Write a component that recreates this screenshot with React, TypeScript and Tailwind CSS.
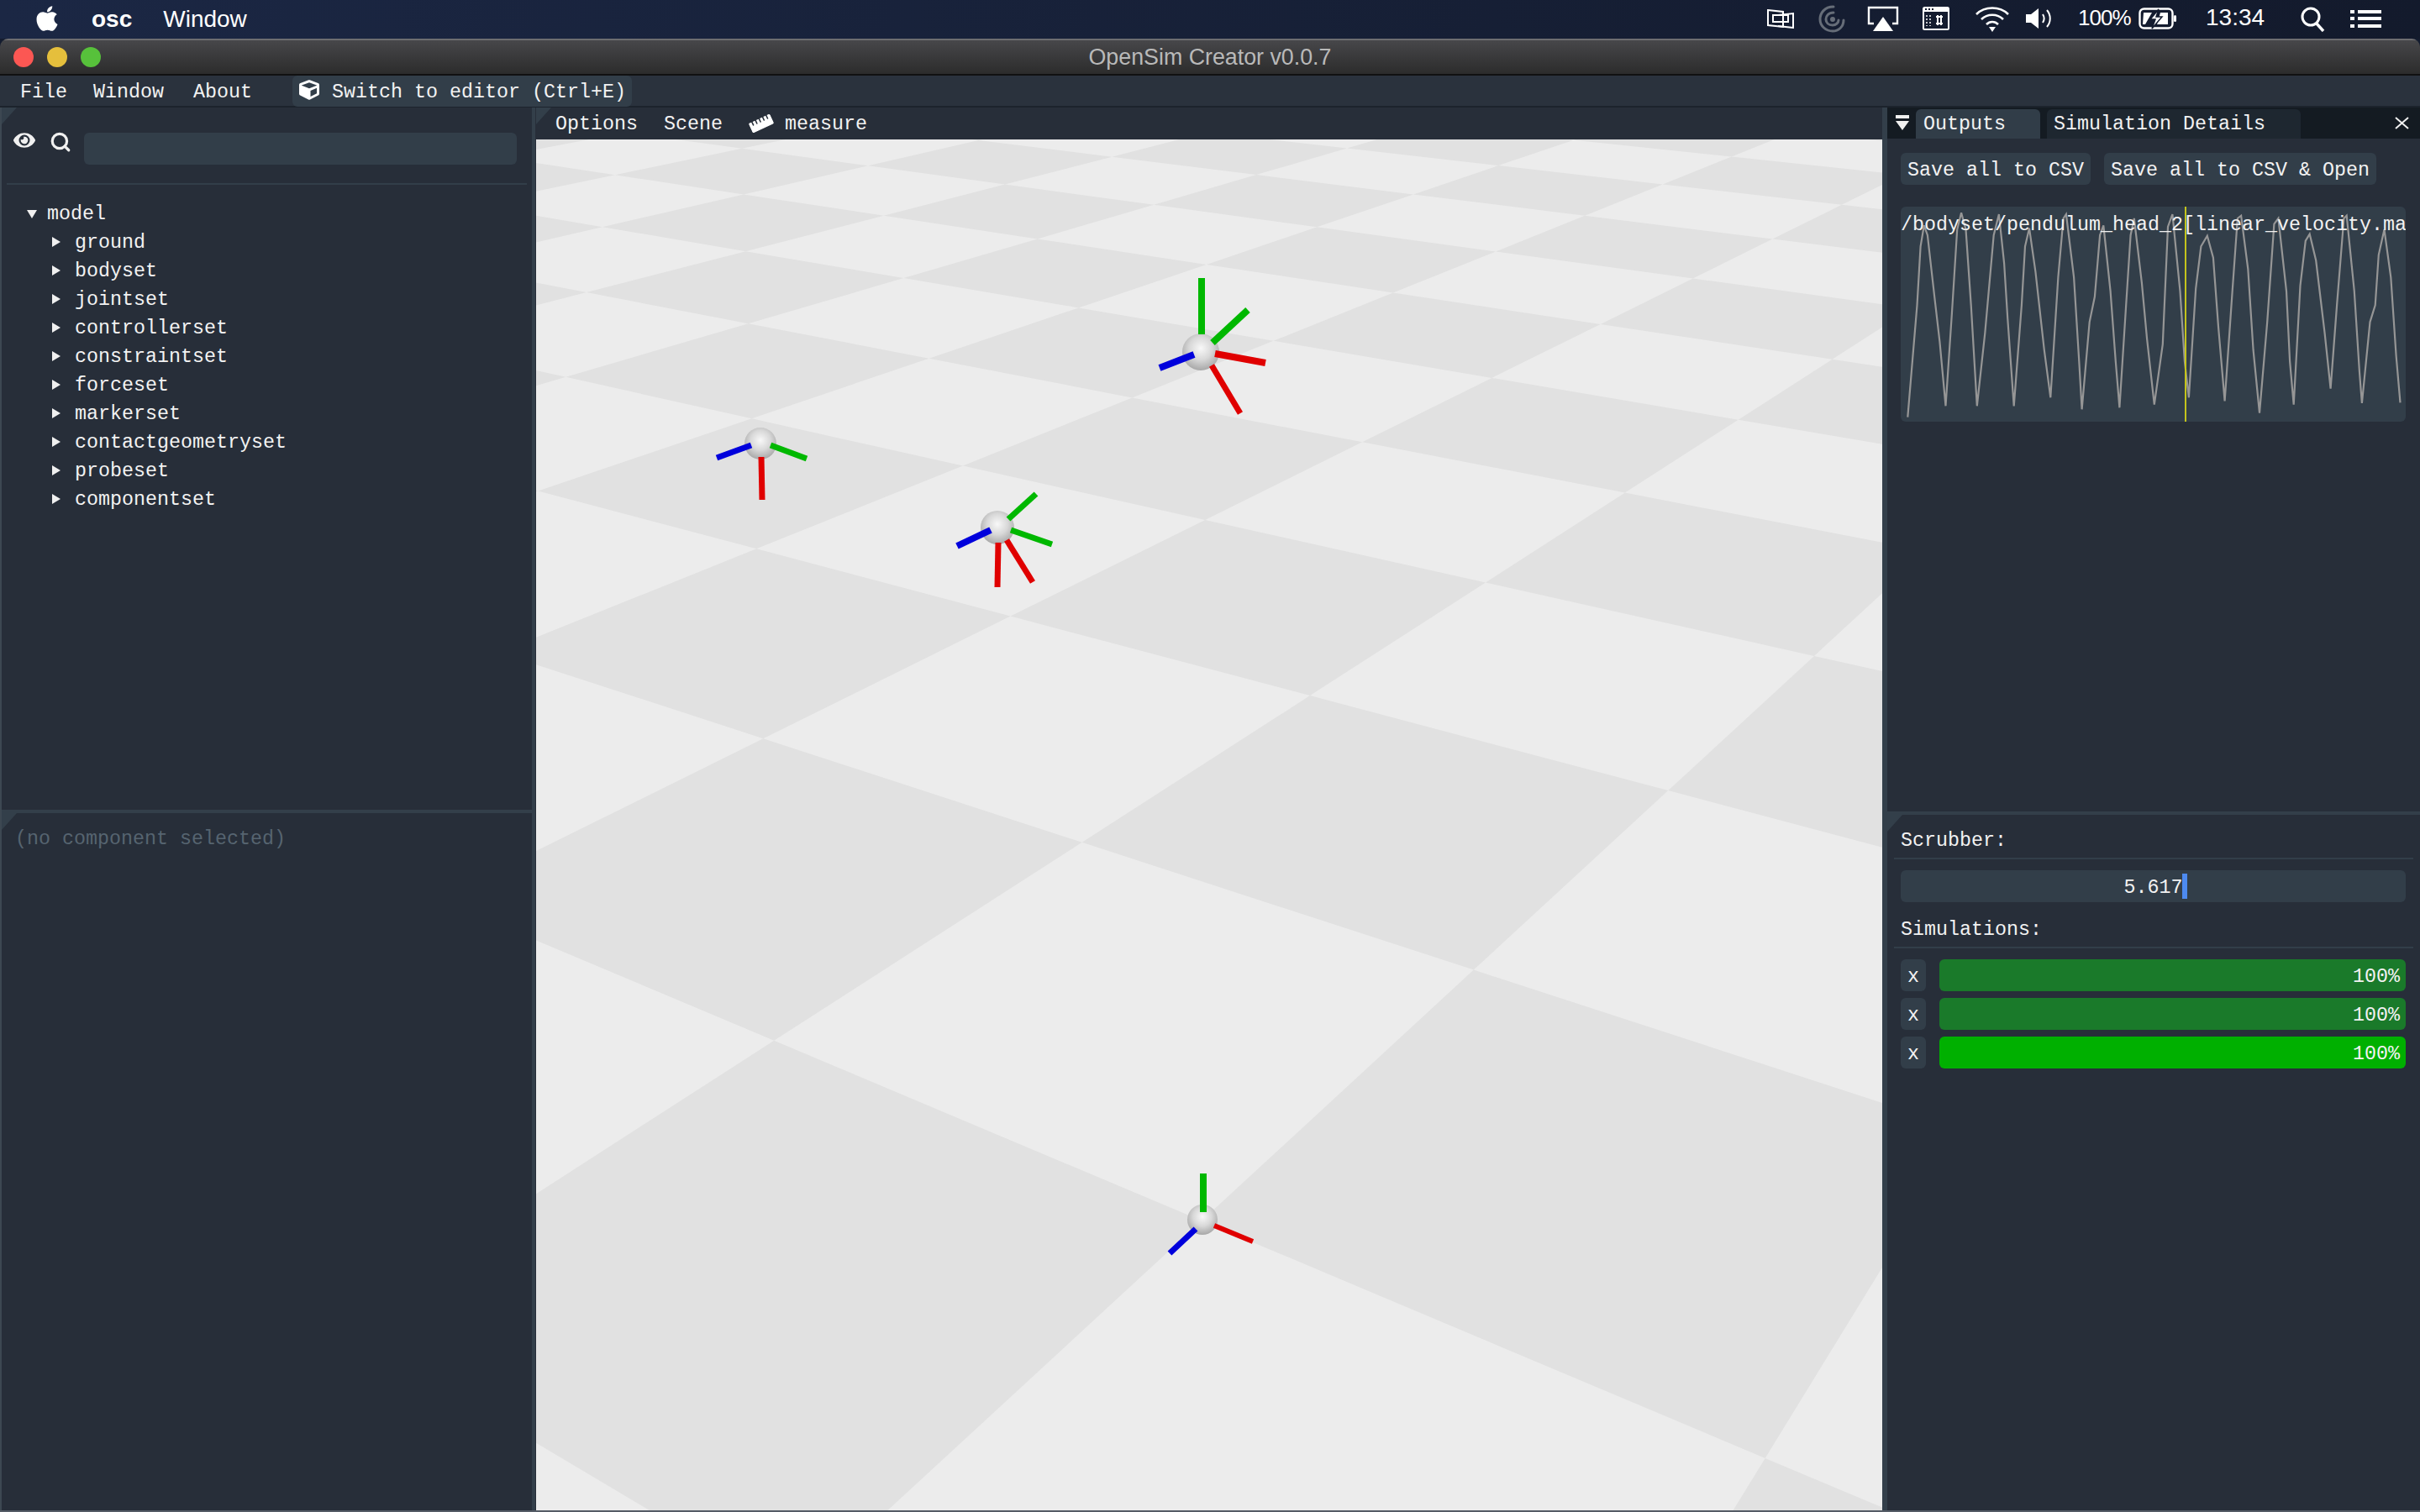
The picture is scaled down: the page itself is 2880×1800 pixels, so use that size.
import React from "react";
import { FaApple, FaCube, FaEye, FaRulerHorizontal } from "react-icons/fa";
import { Search } from "lucide-react";

// ---- floor homography fitted to lattice points measured on the reference ----
const k = 2880 / 1568;
const lattice: number[][] = [
  [0, 0, 500 * k, 677 * k], [1, 0, 779 * k, 790 * k], [2, 0, 1144 * k, 942 * k],
  [-1, 1, 494 * k, 480 * k], [0, 1, 705 * k, 546 * k], [1, 1, 955 * k, 628 * k],
  [-2, 2, 490 * k, 357 * k], [-1, 2, 657 * k, 399 * k], [0, 2, 850 * k, 452 * k], [1, 2, 1082 * k, 512 * k],
  [-3, 3, 889, 498], [-2, 3, 1143, 555], [-1, 3, 1434, 619], [0, 3, 963 * k, 378 * k],
  [-4, 4, 887, 385], [-3, 4, 1103, 427], [-2, 4, 1347, 473], [-3, 5, 1287, 367], [-4, 5, 1077, 330],
  [-5, 5, 887, 297], [-6, 5, 720, 270], [-5, 6, 1050, 257], [-6, 6, 887, 230], [-7, 6, 735, 208],
  [-6, 7, 1023, 198], [-7, 7, 887, 178],
  [-1, 5, 1773, 449], [-1, 6, 1903, 386], [-1, 7, 2014, 331], [-1, 8, 2109, 284], [-1, 9, 2191, 244],
  [0, 6, 2179, 428], [-2, 7, 1782, 299], [-2, 8, 1887, 257], [-2, 9, 1979, 219], [-2, 10, 2061, 187], [-3, 9, 1786, 198],
];
function fit(): number[] {
  const n = 8;
  const M: number[][] = Array.from({ length: n }, () => new Array(n + 1).fill(0));
  const add = (row: number[], b: number) => {
    for (let i = 0; i < n; i++) {
      for (let j = 0; j < n; j++) M[i][j] += row[i] * row[j];
      M[i][n] += row[i] * b;
    }
  };
  for (const [c, r, x, y] of lattice) {
    add([c, r, 1, 0, 0, 0, -c * x, -r * x], x);
    add([0, 0, 0, c, r, 1, -c * y, -r * y], y);
  }
  for (let i = 0; i < n; i++) {
    let p = i;
    for (let q = i + 1; q < n; q++) if (Math.abs(M[q][i]) > Math.abs(M[p][i])) p = q;
    [M[i], M[p]] = [M[p], M[i]];
    for (let q = 0; q < n; q++) {
      if (q === i) continue;
      const f = M[q][i] / M[i][i];
      for (let j = i; j <= n; j++) M[q][j] -= f * M[i][j];
    }
  }
  return M.map((row, i) => row[n] / row[i]);
}
const H = fit();
function project(c: number, r: number): [number, number, number] {
  const w = H[6] * c + H[7] * r + 1;
  return [(H[0] * c + H[1] * r + H[2]) / w, (H[3] * c + H[4] * r + H[5]) / w, w];
}
const darkTiles: string[] = [];
for (let c = -24; c <= 24; c++) {
  for (let r = -12; r <= 30; r++) {
    if (((c + r) % 2) === 0) continue;
    const q = [project(c, r), project(c + 1, r), project(c + 1, r + 1), project(c, r + 1)];
    if (q.some((p) => p[2] < 0.03)) continue;
    darkTiles.push(q.map((p) => `${p[0].toFixed(1)},${p[1].toFixed(1)}`).join(" "));
  }
}

type Seg = [string, number, number, number, number, number];
const RED = "#e00000";
const GRN = "#00b800";
const BLU = "#0000dc";
const markers: { c: [number, number]; r: number; segs: Seg[] }[] = [
  { c: [905, 528], r: 19, segs: [
    [BLU, 894, 530, 853, 545, 7], [GRN, 917, 530, 960, 546, 7], [RED, 906, 544, 907, 595, 7],
  ] },
  { c: [1187, 628], r: 20, segs: [
    [GRN, 1200, 618, 1233, 588, 7], [GRN, 1203, 631, 1252, 648, 7], [BLU, 1179, 631, 1139, 650, 8],
    [RED, 1188, 646, 1187, 699, 7], [RED, 1198, 643, 1229, 693, 7],
  ] },
  { c: [1429, 419], r: 22, segs: [
    [GRN, 1430, 398, 1430, 331, 8], [GRN, 1443, 408, 1485, 369, 8], [BLU, 1421, 422, 1380, 438, 8],
    [RED, 1446, 421, 1506, 432, 8], [RED, 1442, 435, 1476, 492, 7],
  ] },
  { c: [1431, 1452], r: 18, segs: [
    [GRN, 1432, 1443, 1432, 1397, 8], [BLU, 1423, 1463, 1392, 1492, 7], [RED, 1445, 1459, 1491, 1478, 6],
  ] },
];

// ---- plot line, measured on a 2.412 x 3 zoom of the reference ----
const plot: number[][] = [
  [98,800],[125,400],[135,190],[145,115],[155,150],[175,370],[190,530],[207,760],[225,430],[240,130],[252,70],[265,130],[280,400],[297,760],
  [320,500],[345,150],[360,75],[375,250],[385,450],[403,760],[425,400],[435,190],[447,125],[465,280],[490,560],[508,730],[530,300],[545,90],
  [553,75],[575,300],[590,600],[598,772],[620,460],[635,370],[650,150],[660,115],[680,350],[695,600],[706,766],[725,400],[738,150],[748,90],
  [770,320],[785,520],[806,755],[830,540],[845,120],[858,75],[880,350],[893,600],[905,730],[925,340],[940,190],[958,152],[975,230],[990,480],
  [1008,742],[1030,350],[1045,90],[1055,80],[1075,270],[1090,560],[1108,785],[1130,460],[1150,110],[1162,90],[1185,350],[1195,600],[1206,755],
  [1225,330],[1240,170],[1252,146],[1270,240],[1295,500],[1312,698],[1330,400],[1350,90],[1358,80],[1380,350],[1395,640],[1402,750],[1425,460],
  [1440,400],[1450,220],[1466,130],[1485,300],[1500,580],[1512,748],
];
const plotPoints = plot.map(([x, y]) => `${((x - 78) / 2.412).toFixed(1)},${((y - 48) / 3).toFixed(1)}`).join(" ");

const treeItems = ["ground", "bodyset", "jointset", "controllerset", "constraintset", "forceset", "markerset", "contactgeometryset", "probeset", "componentset"];

function Corner() {
  return (
    <svg className="absolute left-0 top-0" width="18" height="20" viewBox="0 0 18 20">
      <polygon points="0,0 18,0 0,20" fill="#333f4a" />
    </svg>
  );
}

function TriRight() {
  return (
    <svg className="mb-[4px]" width="10" height="12" viewBox="0 0 10 12"><polygon points="0,0 10,6 0,12" fill="#f0f0f0" /></svg>
  );
}

function MenuBarIcons() {
  const s = "#ffffff";
  return (
    <>
      <svg className="absolute left-[2102px] top-[10px]" width="36" height="24" viewBox="0 0 36 24" fill="none" stroke={s} strokeWidth="2">
        <path d="M2 2 L20 4 V22 L2 20 Z" fill="#141c2f" />
        <path d="M14 8 L32 6 V23 L14 21" />
        <path d="M8 8 H26 V16 H8 Z" />
      </svg>
      <svg className="absolute left-[2163px] top-[5px]" width="34" height="34" viewBox="0 0 34 34" fill="none" stroke="#666d78" strokeWidth="3" strokeLinecap="round">
        <path d="M19 3 C8 3 3 11 3 18 C3 26 10 32 18 32 C25 32 31 27 31 19" />
        <path d="M19 10 C13 10 10 14 10 18 C10 22 13 25 18 25 C22 25 25 22 25 19" />
        <circle cx="18" cy="18" r="1.5" />
      </svg>
      <svg className="absolute left-[2222px] top-[7px]" width="38" height="30" viewBox="0 0 38 30" fill="none">
        <path d="M8 21 H2 V2 H36 V21 H30" stroke={s} strokeWidth="2.4" />
        <polygon points="19,13 31,30 7,30" fill={s} />
      </svg>
      <svg className="absolute left-[2288px] top-[8px]" width="32" height="28" viewBox="0 0 32 28">
        <rect x="0" y="0" width="32" height="28" rx="2.5" fill={s} />
        <rect x="2" y="6" width="28" height="20" fill="#141c2f" />
        <rect x="3" y="2" width="2" height="2" fill="#141c2f" /><rect x="7" y="2" width="2" height="2" fill="#141c2f" /><rect x="11" y="2" width="2" height="2" fill="#141c2f" />
        <path d="M16 12 H24 M16 20 H24 M18 10 V22 M22 10 V22" stroke={s} strokeWidth="2" fill="none" />
        <path d="M5 10 V23 M9 10 V23" stroke={s} strokeWidth="1.5" strokeDasharray="2 2" fill="none" />
      </svg>
      <svg className="absolute left-[2350px] top-[6px]" width="42" height="32" viewBox="0 0 42 32" fill="none" stroke={s} strokeWidth="2.6">
        <path d="M2 11 C12 1 30 1 40 11" />
        <path d="M8 17 C15 10 27 10 34 17" />
        <path d="M14 23 C18 19 24 19 28 23" />
        <polygon points="21,32 17,26 25,26" fill={s} stroke="none" />
      </svg>
      <svg className="absolute left-[2411px] top-[9px]" width="34" height="26" viewBox="0 0 34 26" fill="none" stroke={s} strokeWidth="2">
        <polygon points="0,8 6,8 15,1 15,25 6,18 0,18" fill={s} stroke="none" />
        <path d="M20 8 C22 11 22 15 20 18" />
        <path d="M25 3 C30 9 30 17 25 23" />
      </svg>
      <svg className="absolute left-[2545px] top-[9px]" width="46" height="26" viewBox="0 0 46 26" fill="none">
        <rect x="1.5" y="1.5" width="39" height="23" rx="5" stroke={s} strokeWidth="2.4" />
        <rect x="42" y="9" width="3" height="8" rx="1.5" fill={s} />
        <path d="M6 6 H16 L8 20 H5 Z M26 6 H35 V20 H22 Z" fill={s} />
        <polygon points="24,2 14,14 20,14 16,25 28,11 21,11" fill={s} stroke="#141c2f" strokeWidth="1.5" />
      </svg>
      <svg className="absolute left-[2738px] top-[8px]" width="30" height="30" viewBox="0 0 30 30" fill="none" stroke={s} strokeWidth="3">
        <circle cx="12" cy="12" r="10" />
        <path d="M18 19 L27 29" strokeWidth="3.4" />
      </svg>
      <svg className="absolute left-[2797px] top-[12px]" width="38" height="21" viewBox="0 0 38 21" fill={s}>
        <rect x="0" y="0" width="5" height="4" /><rect x="0" y="8" width="5" height="4" /><rect x="0" y="17" width="5" height="4" />
        <rect x="9" y="0" width="28" height="4" /><rect x="9" y="8" width="28" height="4" /><rect x="9" y="17" width="28" height="4" />
      </svg>
    </>
  );
}

export default function App() {
  return (
    <div className="relative flex h-[1800px] w-[2880px] flex-col overflow-hidden bg-[#141c2f] font-['Liberation_Mono',monospace] text-[23.33px] leading-none text-[#f2f2f2]">
      {/* macOS menu bar */}
      <div className="relative flex h-[46px] shrink-0 items-center bg-gradient-to-r from-[#1b2744] to-[#131a2c] font-['Liberation_Sans',sans-serif] text-[28px] text-white">
        <FaApple className="mb-[2px] ml-[39px] text-[34px]" />
        <span className="ml-[36px] font-bold">osc</span>
        <span className="ml-[37px]">Window</span>
        <span className="absolute left-[2473px] top-[8px] text-[26px] tracking-[-1px]">100%</span>
        <span className="absolute left-[2625px] top-[7px]">13:34</span>
        <MenuBarIcons />
      </div>

      {/* window */}
      <div className="flex min-h-0 flex-1 flex-col overflow-hidden rounded-t-[10px] border-b-2 border-[#555c66] bg-[#272e39]">
        <div className="flex h-[44px] shrink-0 items-center justify-center border-t-2 border-b-2 border-t-[#6d6d70] border-b-[#111111] bg-gradient-to-b from-[#47474a] to-[#2c2c2c] font-['Liberation_Sans',sans-serif] text-[26.8px] text-[#b9b9b9]">
          <div className="absolute left-[16px] flex gap-[16px]">
            <span className="h-[24px] w-[24px] rounded-full bg-[#fc5753]" />
            <span className="h-[24px] w-[24px] rounded-full bg-[#e5bf3c]" />
            <span className="h-[24px] w-[24px] rounded-full bg-[#57c13b]" />
          </div>
          OpenSim Creator v0.0.7
        </div>

        {/* main menu */}
        <div className="flex h-[38px] shrink-0 items-center border-b-2 border-[#1c232c] bg-[#2a323d] pl-[24px] whitespace-pre">
          <span className="pt-[5px]">File</span>
          <span className="ml-[31px] pt-[5px]">Window</span>
          <span className="ml-[35px] pt-[5px]">About</span>
          <div className="ml-[48px] flex h-[37px] w-[404px] items-center self-start rounded-[6px] bg-[#323e49] pl-[8px]">
            <FaCube className="mb-[3px] text-[24px] text-white" />
            <span className="ml-[15px] pt-[5px]">Switch to editor (Ctrl+E)</span>
          </div>
        </div>

        <div className="flex min-h-0 flex-1">
          {/* left */}
          <div className="flex w-[637px] shrink-0 border-l-2 border-r-[4px] border-l-[#3d4852] border-r-[#333f4a]">
            <div className="flex min-w-0 flex-1 flex-col">
              <div className="relative h-[836px] shrink-0">
                <Corner />
                <div className="mx-[6px] flex h-[92px] items-start border-b-2 border-[#323e49] pt-[30px]">
                  <FaEye className="ml-[8px] -mt-[4px] text-[26px] text-[#f0f0f0]" />
                  <Search className="ml-[17px] -mt-[2px] text-[#f0f0f0]" size={26} strokeWidth={3} />
                  <div className="ml-[15px] h-[38px] w-[515px] rounded-[6px] bg-[#323e49]" />
                </div>
                <div className="mt-[19px] flex h-[34px] items-center pl-[30px]">
                  <svg className="mb-[2px]" width="12" height="10" viewBox="0 0 12 10"><polygon points="0,0 12,0 6,10" fill="#f0f0f0" /></svg>
                  <span className="ml-[12px]">model</span>
                </div>
                {treeItems.map((t) => (
                  <div key={t} className="flex h-[34px] items-center pl-[60px]">
                    <TriRight />
                    <span className="ml-[17px]">{t}</span>
                  </div>
                ))}
              </div>
              <div className="h-[4px] shrink-0 bg-[#333f4a]" />
              <div className="relative flex-1 pl-[16px] pt-[20px] text-[#566470]">
                <Corner />
                (no component selected)
              </div>
            </div>
          </div>

          {/* viewer */}
          <div className="relative flex min-w-0 flex-1 flex-col border-l border-[#272e39]">
            <Corner />
            <div className="flex h-[38px] shrink-0 items-center pl-[23px] whitespace-pre">
              <span className="pt-[4px]">Options</span>
              <span className="ml-[31px] pt-[4px]">Scene</span>
              <FaRulerHorizontal className="ml-[32px] -rotate-[25deg] text-[28px] text-white" />
              <span className="ml-[14px] pt-[4px]">measure</span>
            </div>
            <div className="min-h-0 flex-1 bg-[#ececec]">
              <svg className="block h-full w-full" viewBox="638 166 1602 1632" preserveAspectRatio="none">
                <defs>
                  <radialGradient id="ball" cx="0.5" cy="0.4" r="0.62">
                    <stop offset="0" stopColor="#f8f8f8" />
                    <stop offset="0.5" stopColor="#d8d8d8" />
                    <stop offset="1" stopColor="#a4a4a4" />
                  </radialGradient>
                </defs>
                {darkTiles.map((p, i) => <polygon key={i} points={p} fill="#e1e1e1" />)}
                {markers.map((m, i) => (
                  <g key={i}>
                    <circle cx={m.c[0]} cy={m.c[1]} r={m.r} fill="url(#ball)" />
                    {m.segs.map((s, j) => (
                      <line key={j} x1={s[1]} y1={s[2]} x2={s[3]} y2={s[4]} stroke={s[0]} strokeWidth={s[5]} />
                    ))}
                  </g>
                ))}
              </svg>
            </div>
          </div>

          {/* right */}
          <div className="flex w-[640px] shrink-0 border-l-[6px] border-[#333f4a]">
            <div className="flex min-w-0 flex-1 flex-col">
              <div className="relative h-[838px] shrink-0">
                <div className="flex h-[37px] items-end bg-[#141b22] pl-[34px] whitespace-pre">
                  <div className="flex h-[35px] w-[148px] items-center rounded-t-[6px] bg-[#313d48] pl-[9px] pt-[3px]">Outputs</div>
                  <div className="ml-[8px] flex h-[35px] w-[302px] items-center rounded-t-[6px] bg-[#1e2730] pl-[8px] pt-[3px]">Simulation Details</div>
                </div>
                <svg className="absolute left-[10px] top-[9px]" width="16" height="18" viewBox="0 0 16 18">
                  <rect x="0" y="0" width="16" height="4" fill="#f0f0f0" />
                  <polygon points="0,7 16,7 8,18" fill="#f0f0f0" />
                </svg>
                <svg className="absolute right-[13px] top-[11px]" width="17" height="15" viewBox="0 0 17 15" stroke="#f0f0f0" strokeWidth="2">
                  <path d="M1 1 L16 14 M16 1 L1 14" />
                </svg>
                <div className="mt-[17px] flex gap-[16px] pl-[16px] whitespace-pre">
                  <div className="flex h-[38px] w-[226px] items-center justify-center rounded-[6px] bg-[#323e49] pt-[5px]">Save all to CSV</div>
                  <div className="flex h-[38px] w-[324px] items-center justify-center rounded-[6px] bg-[#323e49] pt-[5px]">Save all to CSV &amp; Open</div>
                </div>
                <div className="relative ml-[16px] mt-[26px] h-[256px] w-[601px] overflow-hidden rounded-[6px] bg-[#323e49]">
                  <svg className="absolute left-0 top-0" width="601" height="256" viewBox="0 0 601 256">
                    <polyline points={plotPoints} fill="none" stroke="#969696" strokeWidth="2.2" />
                    <line x1="339" y1="0" x2="339" y2="256" stroke="#c4c41c" strokeWidth="2" />
                  </svg>
                  <span className="absolute left-0 top-[11px] whitespace-pre">/bodyset/pendulum_head_2[linear_velocity.ma</span>
                </div>
              </div>
              <div className="h-[4px] shrink-0 bg-[#333f4a]" />
              <div className="relative flex-1">
                <Corner />
                <div className="mt-[14px] flex h-[32px] items-center pl-[16px] pt-[4px]">Scrubber:</div>
                <div className="mx-[8px] mt-[5px] h-[2px] bg-[#323e49]" />
                <div className="relative ml-[16px] mt-[13px] flex h-[38px] w-[601px] items-center justify-center rounded-[6px] bg-[#323e49] pt-[6px]">
                  5.617
                  <span className="absolute left-[335px] top-[4px] h-[30px] w-[6px] bg-[#4d8af0]" />
                </div>
                <div className="mt-[16px] flex h-[32px] items-center pl-[16px] pt-[4px]">Simulations:</div>
                <div className="mx-[8px] mt-[5px] h-[2px] bg-[#323e49]" />
                <div className="mt-[13px] flex flex-col gap-[8px] pl-[16px]">
                  {["#1a7a2a", "#1a7a2a", "#00b000"].map((color, i) => (
                    <div key={i} className="flex h-[38px] items-stretch">
                      <div className="flex w-[30px] items-center justify-center rounded-[6px] bg-[#323e49] pt-[5px]">x</div>
                      <div className="ml-[16px] flex w-[555px] items-center justify-end rounded-[6px] pr-[7px] pt-[5px]" style={{ backgroundColor: color }}>100%</div>
                    </div>
                  ))}
                </div>
              </div>
            </div>
          </div>
        </div>
      </div>
    </div>
  );
}
